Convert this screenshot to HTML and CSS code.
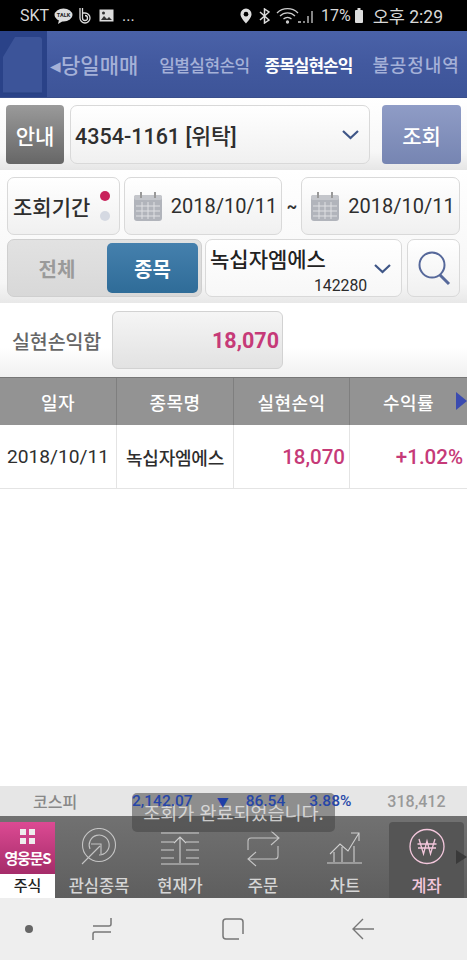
FILE: index.html
```html
<!DOCTYPE html>
<html lang="ko">
<head>
<meta charset="utf-8">
<title>종목실현손익</title>
<link rel="stylesheet" href="styles.css">
</head>
<body>
<div class="phone">
  <div class="status">
    <div class="status-left">
      <span>SKT</span>
      <svg width="19" height="16" viewBox="0 0 19 16"><ellipse cx="9.500" cy="7" rx="9" ry="6.500" fill="#ddd"/><path d="M5 12l-1 4 5-3z" fill="#ddd"/><text x="9.500" y="9" text-anchor="middle" font-size="5.500" font-weight="700" font-family="Roboto" fill="#222">TALK</text></svg>
      <svg width="16" height="17" viewBox="0 0 16 17" fill="none" stroke="#ddd" stroke-width="1.300"><path d="M2 1v10a5 5 0 1 0 5-5H5"/><path d="M4.500 1v10a2.500 2.500 0 1 0 2.500-2.500"/></svg>
      <svg width="15" height="13" viewBox="0 0 15 13"><rect x=".5" y=".5" width="14" height="12" fill="#ddd"/><path d="M2 11l3-4 3 3 2-2 3 3z" fill="#333"/><circle cx="4.500" cy="4" r="1.500" fill="#333"/></svg>
      <span class="dots">...</span>
    </div>
    <div class="status-right">
      <svg class="st-pin" width="12" height="16" viewBox="0 0 13 16"><path d="M6.500 0a6 6 0 0 1 6 6c0 4-6 10-6 10S.5 10 .5 6a6 6 0 0 1 6-6z" fill="#ddd"/><circle cx="6.500" cy="6" r="2.500" fill="#000"/></svg>
      <svg class="st-bt" width="11" height="16" viewBox="0 0 11 16" fill="none" stroke="#ddd" stroke-width="1.500"><path d="M1 4l9 8-4.500 3V1L10 4l-9 8"/></svg>
      <svg class="st-wifi" width="40" height="16" viewBox="0 0 40 16" fill="none" stroke="#ccc" stroke-width="1.300"><path d="M1 5a15 15 0 0 1 21 0M4 8a10.500 10.500 0 0 1 15 0M7.500 11a6 6 0 0 1 8 0"/><circle cx="11.500" cy="14" r="1" fill="#ccc"/><path d="M22 14h3M28 15v-2M32 15V8M36 15V3"/></svg>
      <span class="st-pct">17%</span>
      <svg class="st-batt" width="8" height="15" viewBox="0 0 8 15"><rect x="2.500" y="0" width="3" height="2" fill="#ddd"/><rect x="0" y="2" width="8" height="13" rx="1" fill="#ddd"/></svg>
      <span class="st-time">오후 2:29</span>
    </div>
  </div>

  <header class="header">
    <div class="logo-slot">
      <svg width="47" height="67" viewBox="0 0 47 67"><path d="M15 6h24q3 0 3 3v53H3V26z" fill="#3c5499"/><path d="M3 62h39" stroke="#27407f" stroke-width="1"/></svg>
    </div>
    <nav class="tabs">
      <span class="tab tab-first">◂당일매매</span>
      <span class="tab">일별실현손익</span>
      <span class="tab tab-active">종목실현손익</span>
      <span class="tab tab-last">불공정내역</span>
    </nav>
  </header>

  <section class="bar bar-account">
    <button class="btn btn-guide">안내</button>
    <div class="field field-account">
      <span>4354-1161 [위탁]</span>
      <svg class="chev" width="19" height="11" viewBox="0 0 19 11"><path d="M2 2l7.500 7L17 2" fill="none" stroke="#3f5687" stroke-width="2.200"/></svg>
    </div>
    <button class="btn btn-query">조회</button>
  </section>

  <section class="bar-filters">
    <div class="filter-row">
      <div class="field field-period">
        <span>조회기간</span>
        <span class="period-dots"><i class="dot dot-on"></i><i class="dot dot-off"></i></span>
      </div>
      <div class="field field-date">
        <svg width="30" height="31" viewBox="0 0 30 31"><rect x="1" y="4" width="28" height="26" rx="3" fill="#b1b4bb"/><rect x="1" y="4" width="28" height="5" rx="2" fill="#c4c6cb"/><path d="M3 15h24M3 20h24M3 25h24M9 11v17M15 11v17M21 11v17" stroke="#dfe0e3" stroke-width="1"/><path d="M8 1v6M22 1v6" stroke="#999" stroke-width="2"/></svg>
        <span>2018/10/11</span>
      </div>
      <span class="tilde">~</span>
      <div class="field field-date">
        <svg width="30" height="31" viewBox="0 0 30 31"><rect x="1" y="4" width="28" height="26" rx="3" fill="#b1b4bb"/><rect x="1" y="4" width="28" height="5" rx="2" fill="#c4c6cb"/><path d="M3 15h24M3 20h24M3 25h24M9 11v17M15 11v17M21 11v17" stroke="#dfe0e3" stroke-width="1"/><path d="M8 1v6M22 1v6" stroke="#999" stroke-width="2"/></svg>
        <span>2018/10/11</span>
      </div>
    </div>
    <div class="filter-row filter-row-2">
      <div class="segment">
        <span class="seg seg-off">전체</span>
        <span class="seg seg-on">종목</span>
      </div>
      <div class="field field-stock">
        <span class="stock-name">녹십자엠에스</span>
        <span class="stock-code">142280</span>
        <svg class="stock-chev" width="19" height="11" viewBox="0 0 19 11"><path d="M2 2l7.500 7L17 2" fill="none" stroke="#3f5687" stroke-width="2.200"/></svg>
      </div>
      <div class="field field-search">
        <svg width="34" height="37" viewBox="0 0 34 37" fill="none" stroke="#56689a"><circle cx="15" cy="15" r="12.500" stroke-width="2"/><path d="M23 25l9 9" stroke-width="3"/></svg>
      </div>
    </div>
  </section>

  <section class="summary">
    <span class="summary-label">실현손익합</span>
    <div class="summary-box">18,070</div>
  </section>

  <section class="grid-table">
    <div class="row row-head">
      <div class="cell">일자</div>
      <div class="cell">종목명</div>
      <div class="cell">실현손익</div>
      <div class="cell">수익률<svg class="more" width="11" height="18" viewBox="0 0 11 18"><path d="M0 0l11 9-11 9z" fill="#3b4bb0"/></svg></div>
    </div>
    <div class="row row-body">
      <div class="cell cell-date">2018/10/11</div>
      <div class="cell cell-name">녹십자엠에스</div>
      <div class="cell cell-num">18,070</div>
      <div class="cell cell-num">+1.02%</div>
    </div>
  </section>

  <div class="spacer"></div>

  <section class="ticker">
    <span class="t-name">코스피</span>
    <span class="t-val">2,142.07</span>
    <span class="t-arrow">▼</span>
    <span class="t-val t-chg">86.54</span>
    <span class="t-val t-pct">3.88%</span>
    <span class="t-vol">318,412</span>
  </section>

  <nav class="dock">
    <div class="dock-brand">
      <div class="brand-top">
        <span class="brand-grid"><i></i><i></i><i></i><i></i></span>
        <span class="brand-name">영웅문S</span>
      </div>
      <div class="brand-label">주식</div>
    </div>
    <div class="dock-item dock-watch">
      <svg width="36" height="37" viewBox="0 0 36 37" fill="none" stroke="#c4c4c4" stroke-width="1.100"><circle cx="18" cy="17" r="16.500"/><path d="M9 21a10 10 0 1 1 9 6M1 36l18-18M10 16h10v10"/></svg>
      <span>관심종목</span>
    </div>
    <div class="dock-item dock-price">
      <svg width="40" height="34" viewBox="0 0 40 34" fill="none" stroke="#cfcfcf" stroke-width="1.100"><path d="M1 1h38M1 10h13M26 10h13M1 18h13M26 18h13M1 26h13M26 26h13M1 32h38M20 31V5M14 11l6-6 6 6"/></svg>
      <span>현재가</span>
    </div>
    <div class="dock-item dock-order">
      <svg width="36" height="37" viewBox="0 0 36 37" fill="none" stroke="#c4c4c4" stroke-width="1.100"><path d="M3 20V11q0-3 3-3h28M26 1l8 7-8 7M33 16v10q0 3-3 3H3M11 22l-8 7 8 7"/></svg>
      <span>주문</span>
    </div>
    <div class="dock-item dock-chart">
      <svg width="36" height="34" viewBox="0 0 36 34" fill="none" stroke="#cfcfcf" stroke-width="1.100"><path d="M0 32h35M3 23l10-10 8 7L32 2M24 2h8v8M7 31V21M15 31V16M27 31V15"/></svg>
      <span>차트</span>
    </div>
    <div class="dock-item dock-account">
      <svg width="36" height="37" viewBox="0 0 36 37" fill="none" stroke="#f3c7dc" stroke-width="1.300"><circle cx="18" cy="18.500" r="17"/><path d="M10 11l4.500 15L18 13l3.500 13L26 11M8.500 16h19M9 20h18"/></svg>
      <span>계좌</span>
    </div>
    <svg class="dock-more" width="11" height="14" viewBox="0 0 11 14"><path d="M0 0l11 7-11 7z" fill="#3a3a3a"/></svg>
  </nav>

  <div class="system-nav">
    <i class="nav-dot"></i>
    <svg class="nav-recent" width="22" height="22" viewBox="0 0 22 22" fill="none" stroke="#777" stroke-width="1.500"><path d="M2 22v-6q0-2 2-2h16M20 0v6q0 2-2 2H2"/></svg>
    <svg class="nav-home" width="22" height="22" viewBox="0 0 22 22" fill="none" stroke="#777" stroke-width="1.500"><path d="M17 21H4q-3 0-3-3V4q0-3 3-3h14q3 0 3 3v12"/></svg>
    <svg class="nav-back" width="22" height="22" viewBox="0 0 22 22" fill="none" stroke="#777" stroke-width="1.400"><path d="M22 11H2M11 1L1 11l10 10"/></svg>
  </div>

  <div class="toast">조회가 완료되었습니다.</div>
</div>
</body>
</html>
```
FILE: styles.css
```css
* { box-sizing: border-box; }
html, body { margin: 0; padding: 0; }
body { font-family: Roboto, "Noto Sans CJK KR", sans-serif; background: #fff; }
.phone { position: relative; width: 467px; height: 960px; display: flex; flex-direction: column; overflow: hidden; background: #fff; }

.status { height: 31px; background: #000; color: #d8d8d8; display: flex; justify-content: space-between; align-items: center; padding: 0 24px 0 20px; font-size: 16px; flex: none; }
.status-left, .status-right { display: flex; align-items: center; gap: 5px; }
.status-right { gap: 0; }
.dots { margin-left: 3px; }
.st-bt { margin-left: 7px; }
.st-wifi { margin-left: 6px; }
.st-pct { margin-left: 5px; }
.st-batt { margin-left: 4px; }
.st-time { margin-left: 10px; font-size: 17.500px; }

.header { height: 67px; flex: none; display: flex; background: linear-gradient(#4a62a8, #42599f 50%, #3d5498); border-bottom: 1px solid #3a4f8c; }
.logo-slot { width: 47px; flex: none; background: #2a4288; }
.tabs { flex: 1; display: flex; align-items: center; white-space: nowrap; font-family: "Noto Sans CJK KR", sans-serif; font-weight: 500; color: #a5b1d8; }
.tab { font-size: 17px; letter-spacing: -.6px; margin-left: 21px; }
.tab-first { font-size: 21px; margin-left: 0; letter-spacing: 0; padding-left: 0; word-spacing: 0; }
.tab-active { color: #fff; font-weight: 700; letter-spacing: -1px; margin-left: 15px; }
.tab-last { margin-left: 20px; font-size: 18px; letter-spacing: .9px; }
.tab-first { margin-left: 3px; }

.bar-account { height: 72px; flex: none; display: flex; align-items: flex-start; padding: 7px 6px 0; gap: 6px; background: linear-gradient(#fff, #f7f7f7 75%, #e6e6e6); }
.btn { height: 59px; border: 0; border-radius: 4px; font-family: "Noto Sans CJK KR", sans-serif; font-size: 21px; font-weight: 500; color: #fff; padding: 0; }
.btn-guide { width: 58px; background: linear-gradient(#9a9a9a, #666); }
.btn-query { width: 79px; margin-left: 6px; background: linear-gradient(#8f9cc6, #7685b2); }
.field { background: linear-gradient(#fff, #f0f0f0); border: 1px solid #d9d9d9; border-radius: 7px; font-family: "Noto Sans CJK KR", Roboto, sans-serif; color: #2e2e2e; }
.field-account { flex: 1; height: 59px; display: flex; align-items: center; justify-content: space-between; padding: 0 9px 0 4px; font-family: Roboto, "Noto Sans CJK KR", sans-serif; font-size: 21.500px; font-weight: 500; }
.chev { flex: none; }

.bar-filters { flex: none; height: 133px; padding: 7px 7px 0; background: linear-gradient(#fff, #f6f6f6 85%, #e8e8e8); display: flex; flex-direction: column; gap: 4px; }
.filter-row { display: flex; align-items: center; height: 58px; }
.filter-row-2 { gap: 3px; }
.field-period { width: 113px; height: 58px; display: flex; align-items: center; justify-content: space-between; padding: 0 9px 0 5px; font-size: 21px; font-weight: 500; white-space: nowrap; }
.period-dots { display: flex; flex-direction: column; gap: 10px; }
.dot { display: block; width: 10px; height: 10px; border-radius: 50%; }
.dot-on { background: #c8235c; }
.dot-off { background: #d5d9e2; }
.field-date { height: 58px; display: flex; align-items: center; gap: 8px; padding: 0 0 0 8px; font-family: Roboto, sans-serif; font-size: 20px; margin-left: 4px; }
.field-date:nth-of-type(2) { width: 159px; }
.field-date:last-child { width: 159px; margin-left: 0; }
.tilde { width: 19px; text-align: center; font-size: 16px; font-weight: 700; color: #333; }

.segment { width: 195px; height: 58px; border: 1px solid #cfcfcf; border-radius: 7px; background: linear-gradient(#e2e2e2, #d8d8d8); display: flex; padding: 3px; }
.seg { display: flex; align-items: center; justify-content: center; font-family: "Noto Sans CJK KR", sans-serif; font-size: 20px; font-weight: 700; }
.seg-off { width: 96px; color: #9a9a9a; padding-right: 4px; }
.seg-on { width: 91px; border-radius: 5px; color: #fff; background: linear-gradient(#4580ad, #2f6c98); }
.field-stock { position: relative; width: 198px; height: 58px; background: linear-gradient(#fff, #f7f7f7); }
.stock-name { position: absolute; left: 4px; top: 2px; font-size: 21px; line-height: 32px; font-weight: 500; color: #222; white-space: nowrap; }
.stock-code { position: absolute; right: 34px; bottom: 1px; font-family: Roboto, sans-serif; font-size: 15.800px; color: #2b2b2b; }
.stock-chev { position: absolute; right: 9px; top: 23px; }
.field-search { width: 53px; height: 58px; margin-left: 2px; display: flex; align-items: center; justify-content: center; }

.summary { flex: none; height: 75px; display: flex; align-items: center; padding: 0 0 0 12px; gap: 11px; background: linear-gradient(#fff, #fff 60%, #f0f0f0); border-bottom: 1px solid #777; }
.summary-label { font-family: "Noto Sans CJK KR", sans-serif; font-size: 19.500px; font-weight: 500; color: #666; letter-spacing: -.1px; width: 89px; white-space: nowrap; }
.summary-box { width: 171px; height: 58px; border: 1px solid #d2d2d2; border-radius: 6px; background: linear-gradient(#f5f5f5, #e2e2e2); display: flex; align-items: center; justify-content: flex-end; padding-right: 3px; font-size: 21.500px; font-weight: 700; color: #c63a78; }

.grid-table { flex: none; }
.row { display: grid; grid-template-columns: 117px 117px 116px 117px; }
.row-head { height: 47px; background: #939393; color: #fff; font-family: "Noto Sans CJK KR", sans-serif; font-size: 18px; font-weight: 500; letter-spacing: .4px; }
.row-body { height: 64px; border-bottom: 1px solid #e4e4e4; font-size: 19.200px; color: #2e2e2e; background: #fff; }
.cell { position: relative; display: flex; align-items: center; justify-content: center; border-right: 1px solid #e4e4e4; white-space: nowrap; }
.row-head .cell { border-right-color: #7f7f7f; }
.cell:last-child { border-right: 0; }
.row-head .cell:last-child { padding-right: 0; }
.more { position: absolute; right: 0; top: 14px; }
.cell-date { justify-content: flex-end; padding-right: 7px; }
.cell-name { font-family: "Noto Sans CJK KR", sans-serif; font-size: 18px; font-weight: 500; letter-spacing: -.2px; }
.cell-num { justify-content: flex-end; padding-right: 4px; color: #c63a78; font-size: 20.500px; font-weight: 500; }

.spacer { flex: 1; background: #fff; }

.ticker { flex: none; height: 30px; background: #e6e6e6; display: flex; align-items: center; font-size: 15.500px; color: #888; padding-left: 33px; white-space: nowrap; }
.t-name { width: 99px; font-family: "Noto Sans CJK KR", sans-serif; font-size: 16px; font-weight: 500; }
.t-val, .t-arrow { position: relative; z-index: 2; color: #2646a8; font-weight: 500; }
.t-arrow { color: #1f3fa8; margin: 0 17px 0 24px; font-size: 12px; }
.t-pct { margin-left: 24px; }
.t-vol { margin-left: 36px; font-size: 16px; color: #999; font-weight: 500; }

.dock { flex: none; height: 82px; position: relative; display: flex; background: linear-gradient(#717171, #666 60%, #5e5e5e); }
.dock-brand { width: 55px; margin-top: 6px; display: flex; flex-direction: column; }
.brand-top { height: 52px; background: linear-gradient(#dc4a93, #a52c69); display: flex; flex-direction: column; align-items: center; color: #fff; padding-top: 7px; }
.brand-grid { display: grid; grid-template-columns: 6px 6px; gap: 3px; }
.brand-grid i { display: block; height: 6px; background: #eee; }
.brand-name { font-family: "Noto Sans CJK KR", sans-serif; font-size: 15px; font-weight: 700; letter-spacing: -1.200px; margin-top: 4px; line-height: 20px; white-space: nowrap; }
.brand-label { flex: 1; background: #fff; color: #222; font-family: "Noto Sans CJK KR", sans-serif; font-size: 15px; font-weight: 500; text-align: center; line-height: 22px; }
.dock-item { position: absolute; top: 0; height: 82px; display: flex; flex-direction: column; align-items: center; justify-content: space-between; color: #d6d6d6; font-family: "Noto Sans CJK KR", sans-serif; font-size: 16.500px; font-weight: 500; white-space: nowrap; padding: 12px 0 2px; }
.dock-item span { line-height: 22px; }
.dock-watch { left: 58px; width: 82px; }
.dock-price { left: 140px; width: 80px; padding-top: 16px; }
.dock-order { left: 224px; width: 78px; padding-top: 14px; }
.dock-chart { left: 306px; width: 78px; padding-top: 15px; }
.dock-account { left: 389px; width: 75px; top: 6px; height: 76px; background: #555; border-radius: 4px 4px 0 0; color: #f3c7dc; padding-top: 6px; }
.dock-more { position: absolute; right: 0; top: 34px; }

.system-nav { flex: none; height: 62px; background: #eeeeee; display: flex; align-items: center; padding-left: 25px; }
.nav-dot { width: 8px; height: 8px; border-radius: 50%; background: #666; display: block; }
.nav-recent { margin-left: 58px; }
.nav-home { margin-left: 109px; }
.nav-back { margin-left: 108px; }

.toast { position: absolute; z-index: 1; left: 132px; top: 793px; width: 203px; height: 39px; border-radius: 5px; background: rgba(70,70,70,.55); color: rgba(235,235,235,.8); font-family: "Noto Sans CJK KR", sans-serif; font-size: 18.500px; text-align: center; line-height: 39px; white-space: nowrap; overflow: hidden; }
```
